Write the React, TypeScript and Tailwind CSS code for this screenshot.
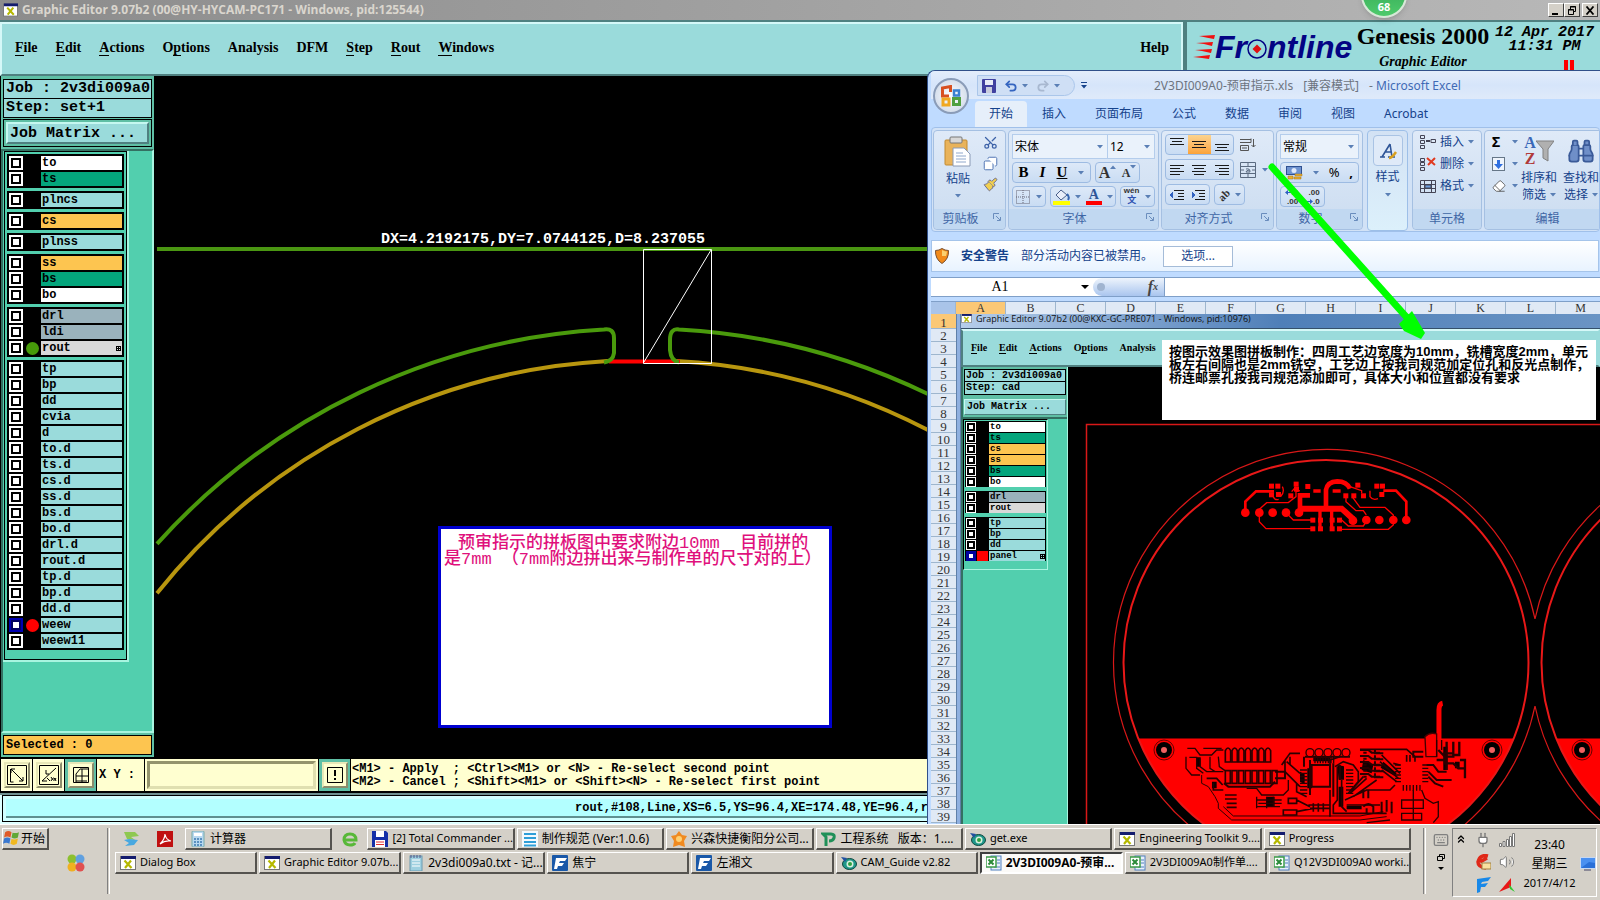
import type { ReactNode } from 'react';
import clsx from 'clsx';
import { Scissors, Copy, Paintbrush, Undo2, Redo2, Volume2, Keyboard, Plug, ChevronsUp, Binoculars, Eraser } from 'lucide-react';

const MONO = "font-['Liberation_Mono','Noto_Sans_CJK_SC',monospace]";
const SERIF = "font-['Liberation_Serif','Noto_Sans_CJK_SC',serif]";
const UI = "font-['Noto_Sans','Noto_Sans_CJK_SC',sans-serif]";

type Layer = { name: string; color: string; dot?: 'green' | 'red'; active?: boolean; mark?: boolean };

const CYAN = 'bg-[#9adbdb]';
const WHITE = 'bg-white';
const GREEN = 'bg-[#04a57c]';
const AMBER = 'bg-[#fdc550]';
const SLATE = 'bg-[#9ab2bc]';
const SILVER = 'bg-[#d9d9d9]';

const mainLayers: Layer[][] = [
    [{ name: 'to', color: WHITE }, { name: 'ts', color: GREEN }],
    [{ name: 'plncs', color: CYAN }],
    [{ name: 'cs', color: AMBER }],
    [{ name: 'plnss', color: CYAN }],
    [{ name: 'ss', color: AMBER }, { name: 'bs', color: GREEN }, { name: 'bo', color: WHITE }],
    [{ name: 'drl', color: SLATE }, { name: 'ldi', color: SLATE }, { name: 'rout', color: SILVER, dot: 'green', mark: true }],
    [
        ...['tp', 'bp', 'dd', 'cvia', 'd', 'to.d', 'ts.d', 'cs.d', 'ss.d', 'bs.d', 'bo.d', 'drl.d', 'rout.d', 'tp.d', 'bp.d', 'dd.d'].map(
            (name): Layer => ({ name, color: CYAN })
        ),
        { name: 'weew', color: CYAN, dot: 'red', active: true },
        { name: 'weew11', color: CYAN },
    ],
];

const panelLayers: Layer[][] = [
    [
        { name: 'to', color: WHITE },
        { name: 'ts', color: GREEN },
        { name: 'cs', color: AMBER },
        { name: 'ss', color: AMBER },
        { name: 'bs', color: GREEN },
        { name: 'bo', color: WHITE },
    ],
    [{ name: 'drl', color: SLATE }, { name: 'rout', color: SILVER }],
    [
        { name: 'tp', color: CYAN },
        { name: 'bp', color: CYAN },
        { name: 'dd', color: CYAN },
        { name: 'panel', color: CYAN, dot: 'red', active: true, mark: true },
    ],
];

// [label, index of the underlined letter]
const menus: [string, number][] = [
    ['File', 0], ['Edit', 0], ['Actions', 0], ['Options', 1], ['Analysis', -1],
    ['DFM', -1], ['Step', 0], ['Rout', 0], ['Windows', 0],
];

function MenuLabel({ text, at }: { text: string; at: number }) {
    if (at < 0) return <>{text}</>;
    return (
        <>
            {text.slice(0, at)}
            <span className="border-b border-black">{text[at]}</span>
            {text.slice(at + 1)}
        </>
    );
}

function XIcon({ className }: { className?: string }) {
    return (
        <svg viewBox="0 0 16 14" className={clsx('shrink-0', className)}>
            <rect x="0.5" y="0.5" width="15" height="13" fill="#fff" stroke="#777" />
            <rect x="1" y="0" width="15" height="3" fill="#141c6e" />
            <path d="M4.5 4.5l7 7.5M11 4.5l-6 7.5" stroke="#b5b800" strokeWidth="2.2" />
        </svg>
    );
}

function Caret({ className }: { className?: string }) {
    return (
        <svg viewBox="0 0 6 4" className={clsx('h-[4px] w-[6px] shrink-0', className)}>
            <path d="M0 0h6L3 3.5z" fill="#5a7fb5" />
        </svg>
    );
}

/* ---------- Graphic editor ---------- */

function WinButton({ label, children }: { label: string; children: ReactNode }) {
    return (
        <button aria-label={label} className="flex h-[14px] w-4 items-center justify-center border border-t-white border-l-white border-r-[#404040] border-b-[#404040] bg-[#d4d0c8]">
            <svg viewBox="0 0 10 9" className="h-[9px] w-[10px]" fill="none" stroke="#000">
                {children}
            </svg>
        </button>
    );
}

function LayerRow({ layer }: { layer: Layer }) {
    return (
        <label className="flex h-[14px] items-center">
            <input
                type="checkbox"
                defaultChecked={layer.active}
                className={clsx(
                    'size-[14px] shrink-0 appearance-none bg-white',
                    layer.active
                        ? 'shadow-[inset_0_0_0_2px_#0000b0,inset_0_0_0_4px_#000060]'
                        : 'shadow-[inset_0_0_0_2px_#fff,inset_0_0_0_4px_#000]'
                )}
            />
            <span className="flex w-[18px] shrink-0 justify-center">
                {layer.dot && <span className={clsx('size-[13px] rounded-full', layer.dot === 'green' ? 'bg-[#469a0a]' : 'bg-[#ff0000]')} />}
            </span>
            <span className={clsx('flex h-[14px] flex-1 items-center justify-between pr-px pl-px text-xs leading-[14px] font-bold', layer.color)}>
                {layer.name}
                {layer.mark && <MarkIcon />}
            </span>
        </label>
    );
}

function MarkIcon() {
    return (
        <svg viewBox="0 0 5 5" className="size-[5px]" fill="none" stroke="#000" strokeWidth="1" shapeRendering="crispEdges">
            <path d="M0 .5h5M0 2.5h5M0 4.5h5M.5 0v5M2.5 0v5M4.5 0v5" />
        </svg>
    );
}

function TitleBar() {
    return (
        <header className="flex h-5 shrink-0 items-center gap-1 bg-linear-to-r from-[#8c8c8c] to-[#b8b8b8] pr-0.5 pl-[3px] font-['Open_Sans','Noto_Sans',sans-serif]">
            <XIcon className="h-[14px] w-[15px]" />
            <h1 className="text-xs leading-5 font-bold text-[#dad6ce]">Graphic Editor 9.07b2 (00@HY-HYCAM-PC171 - Windows, pid:125544)</h1>
            <div className="ml-auto flex">
                <WinButton label="Minimize"><path d="M1 8h6" strokeWidth="2" /></WinButton>
                <WinButton label="Restore"><path d="M3.5 3V.5h5v5H7M1.5 3.5h5v5h-5zM3 1h6M1 4h6" /></WinButton>
                <span className="w-0.5" />
                <WinButton label="Close"><path d="M1.5 .5l7 8M8.500 .5l-7 8" strokeWidth="1.8" /></WinButton>
            </div>
        </header>
    );
}

function MenuBar() {
    return (
        <div className={clsx('flex h-14 shrink-0 border-t-2 border-[#4f8080] bg-[#9adbdb]', SERIF)}>
            <nav className="flex flex-1 items-center border-2 border-t-[#d5f8f8] border-r-[#d5f8f8] border-b-[#4f8080] border-l-[#d5f8f8] pb-0.5 pl-[13px]">
                <div className="flex gap-[18px] text-sm leading-4 font-bold">
                    {menus.map(([text, at]) => (
                        <button key={text}><MenuLabel text={text} at={at} /></button>
                    ))}
                </div>
                <button className="mr-3 ml-auto text-sm leading-4 font-bold">Help</button>
            </nav>
            <div className="flex w-[417px] border-l-4 border-[#4f8080] pl-1.5">
                <Frontline />
                <div className="flex w-36 flex-col items-center font-bold">
                    <span className="text-2xl leading-7 whitespace-nowrap">Genesis 2000</span>
                    <span className="pt-px text-sm leading-[22px] italic">Graphic Editor</span>
                </div>
                <div className={clsx('flex flex-col items-center pt-1 text-[15px] leading-[14px] font-bold whitespace-nowrap italic', MONO)}>
                    <span>12 Apr 2017</span>
                    <span>11:31 PM</span>
                    <span className="mt-1.5 ml-12 h-3 w-2.5 border-x-4 border-[#f00]" />
                </div>
            </div>
        </div>
    );
}

function Frontline() {
    return (
        <div className="flex h-12 w-[158px] shrink-0 items-center pt-0.5 font-['Liberation_Sans',sans-serif] text-[32px] leading-none font-bold text-[#040484] italic">
            <svg viewBox="0 0 22 24" className="h-6 w-[22px] shrink-0" fill="#f01010">
                <path d="M6 1l16-1-1 4-8-1.500zM3 8l17-1-1 4-8-2zM2 15l17-1-1 4-9-2zM0 22l17-2-1 4-7-1z" />
            </svg>
            Fr
            <svg viewBox="0 0 20 20" className="mt-1 size-5 shrink-0">
                <circle cx="10" cy="10" r="9" fill="none" stroke="#040484" strokeWidth="1.5" />
                <path d="M10 5.500L14.500 10 10 14.500 5.500 10z" fill="#e01010" />
            </svg>
            ntline
        </div>
    );
}

function Sidebar() {
    return (
        <aside className={clsx('flex w-[155px] shrink-0 flex-col border-x border-black bg-[#5fbfa5]', MONO)}>
            <div className="px-0.5 pt-[3px] pb-0.5">
                <div className="border border-black bg-[#9adbdb] text-[15px] leading-[18px] font-bold whitespace-nowrap">
                    <p className="h-[19px] border-b border-black pl-0.5">Job : 2v3di009a0</p>
                    <p className="h-[18px] pl-0.5">Step: set+1</p>
                </div>
                <div className="mt-px border border-black p-0.5">
                    <button className="block h-[22px] w-full border-2 border-t-[#c5f8f0] border-r-[#4f8080] border-b-[#4f8080] border-l-[#c5f8f0] bg-[#9adbdb] pl-0.5 text-left text-[15px] leading-[17px] font-bold">
                        Job Matrix ...
                    </button>
                </div>
            </div>
            <div className="flex-1 border-2 border-t-[#347062] border-r-[#a8f5e0] border-b-[#a8f5e0] border-l-[#347062] bg-[#52cfae]">
                <div className="w-[126px] border-r-2 border-b-2 border-[#a8f5e0] pl-px">
                    <div className="flex flex-col gap-[3px] border border-black bg-[#52cfae] px-0.5 pt-0.5 pb-[9px]">
                        {mainLayers.map((group, i) => (
                            <div key={i} className="flex flex-col gap-0.5 bg-black p-0.5">
                                {group.map((layer) => <LayerRow key={layer.name} layer={layer} />)}
                            </div>
                        ))}
                    </div>
                </div>
            </div>
            <div className="px-0.5 pt-0.5 pb-0.5">
                <p className="h-5 border border-black bg-[#fdc550] pl-0.5 text-xs leading-[18px] font-bold">Selected : 0</p>
            </div>
        </aside>
    );
}

function Canvas() {
    return (
        <main className="relative flex-1 overflow-hidden bg-black">
            <svg className="absolute inset-0 h-full w-full">
                <g transform="translate(-155 -76)" fill="none" strokeWidth="4">
                    <path d="M157 593.200A621 621 0 0 1 608 361M676 361A621 621 0 0 1 928 430" stroke="#b8960f" />
                    <path d="M609 361.500H680" stroke="#f00" />
                    <path d="M157 543.800A653 653 0 0 1 604 329.500Q614 328 614 338V353Q613 361 604 362.500" stroke="#4a9a0c" />
                    <path d="M928 394A653 653 0 0 0 679 329.500Q670 328 670 340V350Q671 361 679 362.500" stroke="#4a9a0c" />
                    <path d="M157 249H1600" stroke="#4a9612" />
                    <path d="M643.500 249.500H711.500V363.500H643.500zM644 362L711 250" stroke="#fff" strokeWidth="1" />
                </g>
            </svg>
            <p className={clsx('absolute top-[155px] left-[226px] text-[15px] leading-[17px] font-bold text-white', MONO)}>
                DX=4.2192175,DY=7.0744125,D=8.237055
            </p>
            <div className={clsx('absolute top-[450px] left-[283px] h-[202px] w-[394px] border-[3px] border-[#0000d0] bg-white px-[3px] pt-[7px] text-[17px] leading-4 font-medium whitespace-pre text-[#e0107c]', MONO)}>
                <p className="pl-3.5">预审指示的拼板图中要求附边10mm  目前拼的</p>
                <p>是7mm （7mm附边拼出来与制作单的尺寸对的上）</p>
            </div>
        </main>
    );
}

function ToolButton({ label, on, children }: { label: string; on?: boolean; children: ReactNode }) {
    return (
        <button
            aria-label={label}
            className={clsx('flex h-8 w-[31px] items-center justify-center', on ? 'bg-[#5fbfa5]' : 'border border-[#ffffe0] bg-[#ffffd0]')}
        >
            <span className="flex size-[26px] items-center justify-center border-2 border-t-[#e8e8b8] border-r-[#8c8c6c] border-b-[#8c8c6c] border-l-[#e8e8b8] bg-[#ffffd0]">
                <svg viewBox="0 0 20 20" className="size-5" fill="none" stroke="#000">{children}</svg>
            </span>
        </button>
    );
}

function CommandBar() {
    return (
        <div className={clsx('flex h-[36px] shrink-0 gap-px border-y-2 border-l border-black bg-black text-xs font-bold', MONO)}>
            <ToolButton label="Absolute"><path d="M.5 .5h19v19H.5zM4 4l12 12M4 8V4h4M16 12v4h-4M3.500 4v13h3" /></ToolButton>
            <ToolButton label="Angle"><path d="M.5 .5h19v19H.5zM3 16L17 3M3 16h5M7 5v4h3M12 12q3 6 5 1M12 16q3-6 5 0M8 13l3 3" /></ToolButton>
            <ToolButton label="Grid" on><path d="M2.500 2.500h15v15h-15zM5 17V9l4-5h8M5 11h12M11 4v13M5 16h11" /></ToolButton>
            <label htmlFor="xy" className="flex w-[47px] items-center bg-[#ffffd0] pl-0.5 text-xs whitespace-pre">X Y :</label>
            <div className="flex w-[173px] bg-[#ffffd0] p-0.5">
                <input id="xy" className="w-full border-[3px] border-t-[#94946c] border-r-[#e0e0b0] border-b-[#e0e0b0] border-l-[#94946c] bg-[#ffffd0] px-1 outline-none" />
            </div>
            <ToolButton label="Alert" on><path d="M2.500 2.500h15v15h-15z" /><path d="M10 5v6M10 13v2" strokeWidth="2" /></ToolButton>
            <div className="flex-1 bg-[#ffffd0] pt-1 pl-px leading-[13px] whitespace-pre">
                <p>&lt;M1&gt; - Apply  ; &lt;Ctrl&gt;&lt;M1&gt; or &lt;N&gt; - Re-select second point</p>
                <p>&lt;M2&gt; - Cancel ; &lt;Shift&gt;&lt;M1&gt; or &lt;Shift&gt;&lt;N&gt; - Re-select first point</p>
            </div>
        </div>
    );
}

function StatusBar() {
    return (
        <div className={clsx('h-[31px] shrink-0 border-t-2 border-[#6f9090] bg-[#e0ffff] pb-0.5 pl-0.5', MONO)}>
            <div className="h-[27px] border border-black bg-[#d0ffff] p-[3px]">
                <p className="h-[19px] border-b-2 border-[#5f9090] bg-[#b3ffff] pl-[569px] text-xs leading-[19px] font-bold whitespace-nowrap">
                    rout,#108,Line,XS=6.5,YS=96.4,XE=174.48,YE=96.4,r
                </p>
            </div>
        </div>
    );
}

/* ---------- Excel ---------- */

function Group({ label, width, launcher, children }: { label: string; width: string; launcher?: boolean; children: ReactNode }) {
    return (
        <section className={clsx('flex h-[100px] shrink-0 flex-col rounded-sm border border-[#a5c0e2] bg-linear-to-b from-[#dfeaf8] to-[#cbdcf0]', width)}>
            <div className="flex-1 px-[3px] pt-[3px]">{children}</div>
            <footer className={clsx('relative h-[20px] rounded-b-sm bg-[#c1d8f1] text-center text-xs leading-5 text-[#3f66a5]', launcher && 'pr-[18px]')}>
                {label}
                {launcher && (
                    <svg viewBox="0 0 8 8" className="absolute top-1 right-1 size-2" fill="none" stroke="#6a8dbd">
                        <path d="M.5 6V.5H6M3 3l4 4M7.500 4v3.500H4" />
                    </svg>
                )}
            </footer>
        </section>
    );
}

const BOX = 'flex h-[21px] items-center rounded-sm border border-[#9dbbe2] bg-linear-to-b from-[#dde9f8] to-[#c9dcf3]';

function Combo({ label, value, className }: { label: string; value: string; className: string }) {
    return (
        <div className={clsx('flex h-[25px] items-center border border-[#b4cdec] bg-[#eaf2fb] pr-1', className)}>
            <select aria-label={label} className="min-w-0 flex-1 appearance-none bg-transparent pl-0.5 text-xs leading-5 text-black outline-none">
                <option>{value}</option>
            </select>
            <Caret />
        </div>
    );
}

function Lines({ rows, y = 3, on, arrow }: { rows: [number, number][]; y?: number; on?: boolean; arrow?: 'left' | 'right' }) {
    return (
        <button aria-label="Alignment" className={clsx('flex h-[19px] flex-1 items-center justify-center', on && 'bg-linear-to-b from-[#fbd38e] to-[#fba338]')}>
            <svg viewBox="0 0 16 16" className="size-4" stroke="#1a1a1a" shapeRendering="crispEdges">
                {rows.map(([a, b], i) => <path key={i} d={`M${a} ${y + i * 3 + 0.5}H${b}`} />)}
                {arrow && <path d={arrow === 'left' ? 'M0 8l4-3v6z' : 'M6 8L2 5v6z'} fill="#2f60c0" stroke="none" />}
            </svg>
        </button>
    );
}

function ClipboardGroup() {
    return (
        <Group label="剪贴板" width="w-[73px]" launcher>
            <div className="flex text-xs text-[#15428b]">
                <button className="flex w-[42px] flex-col items-center pt-0.5">
                    <svg viewBox="0 0 28 32" className="h-8 w-7">
                        <rect x="1" y="4" width="22" height="25" rx="1" fill="#e9b35a" stroke="#c18a30" />
                        <rect x="6" y="1" width="12" height="6" rx="1" fill="#d8d8d8" stroke="#777" />
                        <path d="M9 12h11l6 6v12H9z" fill="#fff" stroke="#8a9ab5" />
                        <path d="M12 17h7M12 20h10M12 23h10M12 26h10" stroke="#8fa8cc" />
                    </svg>
                    <span className="leading-[22px]">粘贴</span>
                    <Caret className="mt-1" />
                </button>
                <div className="flex flex-1 flex-col items-center gap-1.5 pt-px">
                    <button aria-label="剪切"><Scissors className="size-[15px] -rotate-90 text-[#3d62a8]" /></button>
                    <button aria-label="复制"><Copy className="size-[15px] -scale-x-100 fill-white text-[#4a6fb0]" strokeWidth={1.5} /></button>
                    <button aria-label="格式刷"><Paintbrush className="size-[15px] fill-[#f0cf50] text-[#6a6a90]" strokeWidth={1.5} /></button>
                </div>
            </div>
        </Group>
    );
}

function FontGroup() {
    return (
        <Group label="字体" width="w-[151px]" launcher>
            <div className="flex">
                <Combo label="字体" value="宋体" className="w-[96px]" />
                <Combo label="字号" value="12" className="w-[47px] border-l-0" />
            </div>
            <div className={clsx('mt-[3px] flex gap-1 font-bold', SERIF)}>
                <div className={clsx(BOX, 'w-[79px] justify-around text-[15px]')}>
                    <button>B</button>
                    <button className="italic">I</button>
                    <button className="underline">U</button>
                    <Caret />
                </div>
                <div className={clsx(BOX, 'w-[45px] justify-around text-[#333]')}>
                    <button className="flex items-start text-base leading-4">A<Caret className="rotate-180" /></button>
                    <button className="flex items-start text-xs leading-4">A<Caret /></button>
                </div>
            </div>
            <div className="mt-[3px] flex justify-between">
                <div className={clsx(BOX, 'w-[34px] justify-around')}>
                    <svg viewBox="0 0 14 14" className="size-[14px]" stroke="#667" strokeDasharray="1 1" fill="none"><path d="M.5 .5h13v13H.5zM7 0v14M0 7h14" /></svg>
                    <Caret />
                </div>
                <div className={clsx(BOX, 'w-[66px] justify-around')}>
                    <svg viewBox="0 0 17 16" className="h-4 w-[17px]">
                        <path d="M3 6l5-5 6 5-6 5z" fill="#e8eefa" stroke="#4a5f8a" /><path d="M14 5q3 3 1 6" fill="none" stroke="#3565b0" strokeWidth="2" />
                        <rect y="12" width="17" height="4" fill="#ff0" />
                    </svg>
                    <Caret />
                    <span className={clsx('flex w-4 flex-col items-center border-b-4 border-[#f00] text-sm leading-3 font-bold text-[#2f5597]', SERIF)}>A</span>
                    <Caret />
                </div>
                <div className={clsx(BOX, 'w-[35px] justify-around text-[#2c50b0]')}>
                    <span className="flex flex-col items-center font-['Liberation_Sans','Noto_Sans_CJK_SC',sans-serif]">
                        <span className="text-[8px] leading-[8px] font-bold text-[#333]">wén</span>
                        <span className="text-[9px] leading-[11px] font-bold">文</span>
                    </span>
                    <Caret />
                </div>
            </div>
        </Group>
    );
}

function AlignGroup() {
    return (
        <Group label="对齐方式" width="w-[113px]" launcher>
            <div className="flex items-center gap-1.5">
                <div className={clsx(BOX, 'w-[69px]')}>
                    <Lines rows={[[1, 15], [3, 13], [1, 15]]} y={1} />
                    <Lines rows={[[1, 15], [3, 13], [1, 15]]} y={4} on />
                    <Lines rows={[[1, 15], [3, 13], [1, 15]]} y={7} />
                </div>
                <svg viewBox="0 0 16 16" className="size-4" fill="none" stroke="#555"><path d="M0 2.500h11M0 5.500h11v-4M.5 8.500h8v5h-8zM2 11h5M13.500 2v8M11.500 8l2 2 2-2" /></svg>
            </div>
            <div className="mt-1 flex items-center gap-1.5">
                <div className={clsx(BOX, 'w-[69px]')}>
                    <Lines rows={[[1, 15], [1, 11], [1, 15], [1, 11]]} />
                    <Lines rows={[[1, 15], [3, 13], [1, 15], [3, 13]]} />
                    <Lines rows={[[1, 15], [5, 15], [1, 15], [5, 15]]} />
                </div>
                <svg viewBox="0 0 16 16" className="size-4" fill="none" stroke="#5a6a80"><path d="M.5 .5h15v15H.5zM8 0v4M8 12v4M0 4.500h16M0 11.500h16M1 8h3M12 8h3M6 7q4-1 4 3M10 8q-4 0-4 2h4" /></svg>
                <Caret />
            </div>
            <div className="mt-1 flex gap-1">
                <div className={clsx(BOX, 'w-[45px]')}>
                    <Lines rows={[[5, 15], [9, 15], [9, 15], [5, 15]]} arrow="left" />
                    <Lines rows={[[5, 15], [9, 15], [9, 15], [5, 15]]} arrow="right" />
                </div>
                <button className={clsx(BOX, 'w-[31px] justify-around')} aria-label="方向">
                    <span className={clsx('-rotate-45 text-[11px] leading-3 font-bold text-[#333]', SERIF)}>ab</span>
                    <Caret />
                </button>
            </div>
        </Group>
    );
}

function NumberGroup() {
    return (
        <Group label="数字" width="w-[87px]" launcher>
            <Combo label="数字格式" value="常规" className="w-full" />
            <div className={clsx(BOX, 'mt-[3px] justify-around text-[13px]')}>
                <svg viewBox="0 0 17 16" className="h-4 w-[17px]">
                    <rect x=".5" y="1.500" width="15" height="8" fill="#6f93d0" stroke="#2f5090" /><circle cx="8" cy="5.500" r="2.500" fill="#dfe8fa" />
                    <path d="M9 9h7v2H9zM8 12h7v2H8zM2 11h5v3H2z" fill="#e8b030" stroke="#a87010" strokeWidth=".5" />
                </svg>
                <Caret />
                <button>%</button>
                <button className="font-bold">,</button>
            </div>
            <div className={clsx(BOX, "mt-[3px] w-[45px] justify-around font-['Liberation_Sans',sans-serif] text-[8px] leading-[9px] font-bold text-[#333]")}>
                <button aria-label="增加小数位数" className="flex flex-col items-end">
                    <span className="flex items-center"><DecimalArrow />.0</span>
                    <span>.00</span>
                </button>
                <button aria-label="减少小数位数" className="flex flex-col items-end">
                    <span>.00</span>
                    <span className="flex items-center"><DecimalArrow className="rotate-180" />.0</span>
                </button>
            </div>
        </Group>
    );
}

function DecimalArrow({ className }: { className?: string }) {
    return <svg viewBox="0 0 6 5" className={clsx('h-[5px] w-[6px]', className)}><path d="M0 2.500L3 0v2h3v1H3v2z" fill="#2f60c0" /></svg>;
}

function SmallAction({ icon, label }: { icon: ReactNode; label: string }) {
    return (
        <button className="flex h-[22px] items-center gap-1 pl-1 text-xs text-[#15428b]">
            <svg viewBox="0 0 16 16" className="size-4" fill="none" stroke="#445">{icon}</svg>
            {label}
            <Caret />
        </button>
    );
}

function Ribbon() {
    return (
        <div className="flex h-[105px] shrink-0 gap-0.5 overflow-hidden rounded-sm border border-[#a0c0ea] bg-[#d2e2f6] pt-0.5 pl-px">
            <ClipboardGroup />
            <FontGroup />
            <AlignGroup />
            <NumberGroup />
            <button className="mx-0.5 flex h-[101px] w-[41px] shrink-0 flex-col items-center rounded-sm border border-[#9dbfe8] bg-linear-to-b from-[#d3e2f4] to-[#dcf0fb] pt-1 text-xs text-[#15428b]">
                <span className="flex h-[31px] w-[30px] items-center justify-center rounded-sm border border-[#a9c3e4] bg-[#dfeaf8]">
                    <svg viewBox="0 0 20 20" className="size-5" fill="none" stroke="#2f5597">
                        <path d="M2 16h5M10 16h7M4 16L12 3M12 3l2 13M7 11h6" strokeWidth="1.600" />
                        <path d="M11 17q3 0 7-6" stroke="#d8a020" strokeWidth="2.500" />
                    </svg>
                </span>
                <span className="pt-px leading-5">样式</span>
                <Caret className="mt-1.5" />
            </button>
            <Group label="单元格" width="w-[70px]">
                <div className="-mt-[3px]">
                    <SmallAction label="插入" icon={<><path d="M.5 1.500h4v3h-4zM.5 6.500h4v3h-4zM.5 11.500h4v3h-4zM11 5.500h4.500v3H11z" /><path d="M6 7h4" strokeWidth="2" /></>} />
                    <SmallAction label="删除" icon={<><path d="M.5 2.500h4v3h-4zM.5 6.500h4v3h-4zM.5 11.500h4v3h-4z" /><path d="M7 2l8 7M15 2L8 9" stroke="#e03a20" strokeWidth="2" /></>} />
                    <SmallAction label="格式" icon={<><path d="M.5 2.500h15v12H.5zM0 6.500h16M0 10.500h16M4.500 2v13M11.500 2v13" /><path d="M5 7h6v3H5z" fill="#6f9fe0" /></>} />
                </div>
            </Group>
            <Group label="编辑" width="w-[127px]">
                <div className="-mt-[3px] flex text-xs text-[#15428b]">
                    <div className="flex w-[30px] flex-col pl-1 text-black">
                        <button className="flex h-[22px] items-center justify-between text-sm font-bold">Σ<Caret /></button>
                        <button aria-label="填充" className="flex h-[22px] items-center justify-between">
                            <svg viewBox="0 0 13 14" className="h-[14px] w-[13px]"><rect x=".5" y=".5" width="12" height="13" fill="#eef4fc" stroke="#678" /><path d="M5 3h3v4h3l-4.500 5L2 7h3z" fill="#2f6fe0" /></svg>
                            <Caret />
                        </button>
                        <button aria-label="清除" className="flex h-[22px] items-center justify-between"><Eraser className="size-[14px] fill-white text-[#555]" strokeWidth={1.5} /><Caret /></button>
                    </div>
                    <button className="flex w-[42px] flex-col items-center pt-0.5 leading-[17px] whitespace-nowrap">
                        <span className={clsx('flex h-[36px] items-center text-base leading-4 font-bold', SERIF)}>
                            <span className="flex flex-col text-[#3a68b8]"><span>A</span><span className="text-[#b03a3a]">Z</span></span>
                            <svg viewBox="0 0 18 24" className="h-6 w-[18px]"><path d="M0 2h18l-6 8v12l-5-3V10z" fill="#b0b0b0" stroke="#808080" /></svg>
                        </span>
                        <span>排序和</span>
                        <span className="flex items-center gap-1">筛选<Caret /></span>
                    </button>
                    <button className="flex w-[42px] flex-col items-center pt-0.5 leading-[17px] whitespace-nowrap">
                        <span className="flex h-[36px] items-center"><Binoculars className="size-7 fill-[#6f8fc8] text-[#3a5a98]" strokeWidth={1.5} /></span>
                        <span>查找和</span>
                        <span className="flex items-center gap-1">选择<Caret /></span>
                    </button>
                </div>
            </Group>
        </div>
    );
}

function ExcelTitle() {
    return (
        <div className="flex h-7 shrink-0 items-center bg-linear-to-b from-[#e3edfb] via-[#d6e5fa] to-[#dfeafa] pt-px pl-[46px] text-xs">
            <div className="flex h-[21px] w-[98px] shrink-0 items-center gap-1 rounded-r-full border border-[#aac6ea] bg-[#cfdff5] pl-1">
                <button aria-label="保存">
                    <svg viewBox="0 0 14 14" className="size-[14px]"><rect width="14" height="14" rx="1" fill="#4040a0" /><rect x="3" y="1" width="8" height="5" fill="#e8ecf8" /><rect x="4" y="8" width="6" height="6" fill="#c8ccdc" /></svg>
                </button>
                <button aria-label="撤消" className="ml-1"><Undo2 className="size-[14px] text-[#3565c0]" strokeWidth={3} /></button>
                <Caret />
                <button aria-label="恢复" className="ml-1"><Redo2 className="size-[14px] text-[#a8b8d0]" strokeWidth={3} /></button>
                <Caret />
            </div>
            <svg viewBox="0 0 6 7" className="ml-1.5 h-[7px] w-[6px] shrink-0"><path d="M0 0h6v1H0zM0 3h6L3 6.500z" fill="#15428b" /></svg>
            <h2 className="ml-[67px] flex gap-2.5 whitespace-nowrap text-[#6d7480]">
                <span>2V3DI009A0-预审指示.xls</span>
                <span>[兼容模式]</span>
                <span>- <span className="text-[#3f6ab5]">Microsoft Excel</span></span>
            </h2>
        </div>
    );
}

const tabs = ['开始', '插入', '页面布局', '公式', '数据', '审阅', '视图', 'Acrobat'];

function ExcelWindow() {
    return (
        <section className={clsx('absolute top-[70px] right-0 bottom-0 left-[927px] flex flex-col overflow-hidden rounded-tl-lg border-t border-l border-[#30508a] bg-[#bfdbff] pl-[3px]', UI)}>
            <ExcelTitle />
            <div className="flex h-7 shrink-0 items-end gap-px pl-[44px]" role="tablist">
                {tabs.map((tab, i) => (
                    <button
                        key={tab}
                        role="tab"
                        aria-selected={i === 0}
                        className={clsx('h-[26px] rounded-t-sm px-[14px] text-xs leading-6 whitespace-nowrap text-[#15428b]', i === 0 && 'bg-[#e6effa]')}
                    >
                        {tab}
                    </button>
                ))}
            </div>
            <button aria-label="Office" className="absolute top-[7px] left-[5px] flex size-9 items-center justify-center rounded-full border-2 border-[#8a9cb8] bg-radial from-white to-[#c5d2e4]">
                <svg viewBox="0 0 22 22" className="size-[22px]" fill="none" strokeWidth="3">
                    <path d="M9 11H2.500V3l8-1.500V7" stroke="#d85020" /><path d="M14 5.500h5v5h-5z" stroke="#3a80d0" strokeWidth="2.500" />
                    <path d="M3 14h6v6H3z" stroke="#f0a820" /><path d="M13.500 13.500h6v6h-6z" stroke="#50a040" />
                </svg>
            </button>
            <Ribbon />
            <div className="mt-2 mr-px flex h-8 shrink-0 items-center border border-[#a5c4ea] bg-linear-to-b from-white to-[#e8f3ff] pl-[3px] text-xs text-[#15428b]">
                <svg viewBox="0 0 14 16" className="h-4 w-[14px]"><path d="M7 .5q3 2 6.500 2Q14 11 7 15.500 0 11 .5 2.500 4 2.500 7 .5z" fill="#f28a1a" stroke="#7a5030" /><path d="M7 2q3 1.500 5 1.500-.5 3-1 4.500H7z" fill="#fbd070" /></svg>
                <strong className="ml-3">安全警告</strong>
                <span className="ml-3">部分活动内容已被禁用。</span>
                <button className="ml-2.5 h-[21px] w-[70px] border border-[#a5bcd8] bg-white leading-[18px]">选项...</button>
            </div>
            <div className="mt-[5px] flex h-5 shrink-0 border-y border-[#7f9fc8] bg-white text-sm text-black">
                <input aria-label="名称框" defaultValue="A1" className={clsx('w-[138px] text-center outline-none', SERIF)} />
                <span className="flex w-5 items-center justify-end"><svg viewBox="0 0 8 4" className="h-1 w-2"><path d="M0 0h8L4 4z" /></svg></span>
                <span className={clsx('ml-1 flex w-[72px] items-center justify-end rounded-l-full border-r border-[#7f9fc8] bg-linear-to-b from-[#eef4fc] to-[#a9c5ee] pr-1.5 font-bold text-[#444] italic', SERIF)}>
                    <span className="mr-auto ml-1 size-2 rounded-full bg-[#a0b4d0]" />
                    <i className="text-base leading-4">f</i><i className="text-[10px]">x</i>
                </span>
                <input aria-label="编辑栏" className="min-w-0 flex-1 outline-none" />
            </div>
            <Sheet />
        </section>
    );
}

function Sheet() {
    return (
        <div className="mt-1 flex min-h-0 flex-1 flex-col">
            <div className={clsx('flex h-[13px] shrink-0 border-t border-[#7f9fc8] bg-[#e0e9f5] text-xs leading-[13px] text-[#333]', SERIF)}>
                <span className="w-[25px] shrink-0 border-r border-[#9eb6ce] bg-[#a9c4e9]" />
                {'ABCDEFGHIJKLM'.split('').map((c) => (
                    <span key={c} className={clsx('w-[50px] shrink-0 border-r border-[#9eb6ce] text-center', c === 'A' && 'bg-[#fbc876]')}>{c}</span>
                ))}
            </div>
            <div className="flex min-h-0 flex-1">
                <ol className={clsx('w-[25px] shrink-0 text-center text-[13px] leading-[13px] text-[#333]', SERIF)}>
                    {Array.from({ length: 39 }, (_, i) => (
                        <li key={i} className={clsx('box-border border-b border-[#9eb6ce]', i === 0 ? 'h-[15px] bg-[#fbc876] pt-0.5' : 'h-[13px] bg-[#e0e9f5]')}>{i + 1}</li>
                    ))}
                </ol>
                <div className="w-[5px] shrink-0 border-x border-[#5f7fa8] bg-[#8fb0e0]" />
                <Embedded />
            </div>
        </div>
    );
}

/* ---------- Picture placed on the sheet ---------- */

function Embedded() {
    return (
        <div className="relative flex min-w-0 flex-1 flex-col overflow-hidden bg-black">
            <div className="flex h-[15px] shrink-0 items-start gap-1 border-b border-[#35506a] bg-linear-to-r from-[#b5cdea] via-[#4f7fb8] to-[#6a94c4] font-['Open_Sans',sans-serif] text-[9px] leading-[10px] text-[#111]">
                <XIcon className="h-[9px] w-[11px]" />
                <span className="whitespace-nowrap">Graphic Editor 9.07b2 (00@KXC-GC-PRE071 - Windows, pid:10976)</span>
            </div>
            <nav className={clsx('flex h-[38px] shrink-0 items-center gap-3 border-2 border-t-[#d5f8f8] border-r-[#9adbdb] border-b-[#4f8080] border-l-[#4f8080] bg-[#9adbdb] pb-0.5 pl-2 text-[10px] leading-[11px] font-bold', SERIF)}>
                {menus.slice(0, 5).map(([text, at]) => (
                    <span key={text}><MenuLabel text={text} at={at} /></span>
                ))}
            </nav>
            <div className="flex min-h-0 flex-1">
                <aside className={clsx('w-[107px] shrink-0 border-r border-l-2 border-r-[#a8f5e0] border-l-[#347062] bg-[#52cfae] font-bold', MONO)}>
                    <div className="border-b-2 border-[#347062] bg-[#5fbfa5] p-px pt-0.5 pb-0.5 text-[10px]">
                        <p className="h-[13px] border border-black bg-[#9adbdb] pl-px leading-[11px] whitespace-nowrap">Job : 2v3di009a0</p>
                        <p className="h-[13px] border border-t-0 border-black bg-[#9adbdb] pl-px leading-[12px]">Step: cad</p>
                        <p className="mt-1 h-4 border border-t-[#c5f8f0] border-r-[#4f8080] border-b-[#4f8080] border-l-[#c5f8f0] bg-[#9adbdb] pl-0.5 leading-[14px]">Job Matrix ...</p>
                    </div>
                    <div className="flex w-[85px] flex-col gap-1 border border-t-black border-r-[#a8f5e0] border-b-[#a8f5e0] border-l-black p-px pb-2">
                        {panelLayers.map((group, i) => (
                            <div key={i} className="flex flex-col gap-px bg-black p-px pb-0">
                                {group.map((layer) => (
                                    <div key={layer.name} className="flex h-[10px] text-[9px] leading-[10px]">
                                        <span
                                            className={clsx(
                                                'size-[10px] shrink-0 bg-white',
                                                layer.active ? 'shadow-[inset_0_0_0_3px_#0000a0]' : 'shadow-[inset_0_0_0_1px_#fff,inset_0_0_0_3px_#000]'
                                            )}
                                        />
                                        <span className={clsx('ml-px w-[11px]', layer.dot && 'bg-[#f00]')} />
                                        <span className={clsx('ml-px flex flex-1 items-center justify-between pl-px', layer.color)}>
                                            {layer.name}
                                            {layer.mark && <MarkIcon />}
                                        </span>
                                    </div>
                                ))}
                            </div>
                        ))}
                    </div>
                </aside>
                <Board />
            </div>
            <div className="absolute top-[26px] right-1 left-[201px] h-20 bg-white pt-[5px] pl-[7px] font-['Liberation_Sans','Noto_Sans_CJK_SC',sans-serif] text-[13px] leading-[13px] font-bold whitespace-nowrap text-black">
                <p>按图示效果图拼板制作：四周工艺边宽度为10mm，铣槽宽度2mm，单元</p>
                <p>板左右间隔也是2mm铣空，工艺边上按我司规范加定位孔和反光点制作，</p>
                <p>桥连邮票孔按我司规范添加即可，具体大小和位置都没有要求</p>
            </div>
        </div>
    );
}

const smallPads = [
    [357, 551], [376, 551], [357, 577], [378, 576], [431, 545], [415, 580], [466, 552], [432, 560], [580, 580], [604, 580],
    [616, 548], [633, 580], [673, 551], [690, 551], [688, 576], [481, 653], [504, 653], [539, 653], [561, 653], [481, 679],
    [504, 679], [539, 679], [561, 679],
];

function TopCircuit() {
    return (
        <g transform="translate(1150 300) scale(.3333)" fill="none" stroke="#f00">
            {[[286, 638], [328, 638], [368, 638], [408, 638], [447, 638], [609, 662], [649, 660], [688, 660], [730, 660], [769, 660]].map(([x, y]) => (
                <circle key={x} cx={x} cy={y} r="13" fill="#f00" stroke="none" />
            ))}
            {smallPads.map(([x, y]) => <rect key={`${x}-${y}`} x={x} y={y} width="15" height="15" fill="#f00" stroke="none" />)}
            <path d="M286 638V605L318 574H372M700 572H738L769 605V660" strokeWidth="8" />
            <path d="M328 638V628L350 608H415L438 590V575L450 572M328 640V665L348 686H485M408 638L430 660H485M438 560L425 575M397 560Q405 575 392 590M370 590Q375 602 386 598" strokeWidth="4" />
            <path d="M588 590V605L618 632H640L649 645M608 592L630 622H705L730 645V675L715 688H575M575 660L595 678H640L649 665M600 560L635 572V580M660 572V590Q668 602 684 596" strokeWidth="4" />
            <path d="M510 625V686M545 625V686M490 573H512M548 573H572" strokeWidth="10" />
            <path d="M450 638V586H480" strokeWidth="14" />
            <path d="M447 626H575L610 658" strokeWidth="18" />
            <path d="M528 625V570Q532 545 562 544Q590 544 600 566" strokeWidth="14" />
        </g>
    );
}

function BottomCircuit() {
    const pins = Array.from({ length: 8 }, (_, i) => i);
    return (
        <g transform="translate(1100 640) scale(.3333)" fill="none" stroke="#2a0000" strokeWidth="4">
            {/* antenna feed */}
            <path d="M1017 300V210Q1017 192 1028 190" stroke="#f00" strokeWidth="15" />
            <path d="M975 290Q990 275 1010 282V350H978z" fill="#f00" stroke="#400" />
            <path d="M1010 300V350M1025 300V330" />
            {/* bare laminate */}
            <path
                d="M622 385h14v60h-14zM712 375l20 4v40h-16zM716 440h14v60h-14zM790 360l30 15-5 25-30-10zM850 365l40 35-6 8-42-25zM1030 320h12v70h-12zM1065 365h14v20h-14zM600 395l14 8v30l-14-8zM640 352h50v12h-50zM740 498h45v10h-45zM500 470h24v30h-24zM336 425h14v20h-14zM290 352h12v28h-12z"
                fill="#120000"
                stroke="none"
            />
            {/* connector pads */}
            {pins.slice(0, 7).map((i) => <path key={i} d={`M${376 + i * 20} 366V332q8-16 16 0V366z`} strokeWidth="5" />)}
            {pins.map((i) => <path key={i} d={`M${376 + i * 20} 392h15V430h-15z`} strokeWidth="5" />)}
            <path d="M372 430L385 440H510L525 425M525 395H555V415H525" strokeWidth="6" />
            {/* left nets */}
            <path d="M262 325H285L300 345H335L350 330H370M310 325H365M258 350V385L275 405H300M268 352H290V385L310 400M300 355V380L320 395H350M330 350V385L345 395H370M355 350L358 380 375 392" />
            <path d="M305 405V430L325 440 345 470 355 490V505L395 540H780L860 530M370 500L400 528H780L850 515" strokeWidth="3" />
            <path d="M320 415H350L368 435M340 430V450H370M375 465H410M375 477H410M380 490H410M380 502H410" strokeWidth="5" />
            <path d="M440 445H470L485 465H550L565 450V420M470 480H545M475 490H545M470 500H540M470 470V505M500 470V505M520 470V500" />
            {/* main controller */}
            <path d="M615 350H750M612 350V380M635 375H690V440H635zM630 360V465M700 370V470" strokeWidth="6" />
            {pins.slice(0, 5).map((i) => <circle key={i} cx={630 + i * 27} cy="338" r="12" fill="#f00" />)}
            {pins.map((i) => <path key={i} d={`M600 ${390 + i * 10}H622M738 ${390 + i * 10}H760M${645 + i * 8} 350V370`} />)}
            <path d="M545 375L570 340H600M555 360V395L590 430V455L620 470M560 365L600 400M570 350V375M560 400L600 440" strokeWidth="5" />
            <path d="M705 380L730 365 760 375 775 395V425L745 460M720 375V420M712 380V480L700 495V520H860M725 420V500L740 515M690 380V360L720 350" strokeWidth="5" />
            <path d="M735 480L800 450H870L885 435M740 495H840M760 470L830 420M750 460L800 415M755 450L790 410" strokeWidth="5" />
            <path d="M625 495H690M630 505H690M640 490V515M655 490V515M670 490V515M690 450V530M565 475H590V490H565zM550 510H590V525H550zM590 480L630 500M590 515L640 505" strokeWidth="5" />
            <path d="M790 500Q805 485 820 500V520M800 505V520M845 485V520M860 480V515M875 485V520M790 450V475M805 450V475" strokeWidth="6" />
            {/* discrete field */}
            {pins.slice(0, 5).map((i) => (
                <path key={i} d={`M780 ${330 + i * 18}H805L815 ${338 + i * 18}H840M825 ${328 + i * 18}V${340 + i * 18}H850M790 ${338 + i * 18}H800`} strokeWidth="6" />
            ))}
            <path d="M780 328H920L945 350V365M845 345L900 400M840 365L895 415M845 390L890 425M880 370L900 375M920 365V345M930 365V345" strokeWidth="5" />
            {/* square package */}
            {pins.slice(0, 6).map((i) => <path key={i} d={`M885 ${375 + i * 10}H903M967 ${375 + i * 10}H985M${910 + i * 10} 435V452`} />)}
            <path d="M980 375H1000L1015 395H1040M985 395L1010 420H1055M985 410L1005 430 1030 440M970 350H940V335H970" strokeWidth="6" />
            <path d="M1015 330L1035 350V370H1060L1075 385H1098M1040 305V390M1060 305V350H1035M1078 305V345H1060M1080 360H1095V415M1030 340H1060M1010 360H1040" strokeWidth="7" />
            <path d="M940 450V480H905V505H970V480H940M905 520H965V540H905zM940 480V540M965 450L975 475 1000 490 1015 485V530L1000 548M800 548L870 540" />
        </g>
    );
}

function Board() {
    return (
        <svg className="min-w-0 flex-1">
            <defs>
                <clipPath id="pour"><path d="M1060 738.500H1600V900H1060z" /></clipPath>
            </defs>
            <g transform="translate(-1068 -367)" fill="none" stroke="#d81818">
                <path d="M1086.500 830V424.500H1700" strokeWidth="1.500" />
                <g clipPath="url(#pour)" fill="#f00" stroke="none">
                    <circle cx="1326" cy="662.500" r="202.500" />
                    <circle cx="1744" cy="662.500" r="202.500" />
                </g>
                <path d="M1535 706A213 213 0 1 1 1535 619A213 213 0 0 1 1744 450M1535 706A213 213 0 0 0 1744 876" strokeWidth="1.200" />
                <circle cx="1326" cy="662.500" r="202.500" strokeWidth="2" stroke="#e81818" />
                <circle cx="1744" cy="662.500" r="202.500" strokeWidth="2" stroke="#e81818" />
                {[1164, 1492, 1582].map((x) => (
                    <g key={x} stroke="none">
                        <circle cx={x} cy="750" r="10" fill="none" stroke="#600" />
                        <circle cx={x} cy="750" r="8" fill="#000" />
                        <circle cx={x} cy="750" r="3" fill="#f06060" />
                    </g>
                ))}
                <TopCircuit />
                <BottomCircuit />
            </g>
        </svg>
    );
}

/* ---------- Taskbar ---------- */

type Task = { text: string; icon: ReactNode; small?: boolean; active?: boolean };

const calcIcon = <svg viewBox="0 0 16 16" className="size-4 shrink-0"><rect x="2" width="12" height="16" rx="1" fill="#b8d8f0" stroke="#7aa" /><rect x="4" y="2" width="8" height="3" fill="#fff" /><path d="M4 8h8M4 11h8M4 14h8" stroke="#5a90c0" strokeWidth="2" strokeDasharray="2 1" /></svg>;
const diskIcon = <svg viewBox="0 0 16 16" className="size-4 shrink-0"><path d="M0 0h14l2 2v14H0z" fill="#1530a8" /><rect x="4" width="8" height="6" fill="#fff" /><rect x="3" y="9" width="10" height="7" fill="#fff" /><path d="M4 11h8M4 13.500h8" stroke="#e03030" /></svg>;
const listIcon = <svg viewBox="0 0 16 16" className="size-4 shrink-0"><rect width="16" height="16" fill="#f4fafd" /><path d="M2 3h12M2 7h12M2 11h12M2 14.500h12" stroke="#2f9fd8" strokeWidth="2" /></svg>;
const starIcon = <svg viewBox="0 0 16 16" className="size-4 shrink-0"><path d="M8 0l3 4 5 1-3 5 1 6-6-2-6 2 1-6-3-5 5-1z" fill="#f08a20" /><circle cx="8" cy="8" r="3" fill="#ffd070" /></svg>;
const greenPIcon = <svg viewBox="0 0 16 16" className="size-4 shrink-0" fill="none" stroke="#209058" strokeWidth="3"><path d="M5 15V6l-3-3h8q4 0 3 4-1 3-5 3" /></svg>;
const eyeIcon = <svg viewBox="0 0 16 16" className="size-4 shrink-0"><ellipse cx="8.500" cy="9" rx="7" ry="5.500" fill="#20988a" stroke="#104840" /><circle cx="9" cy="9" r="3.500" fill="#d8f0e0" /><circle cx="9" cy="9" r="2" fill="#30a040" /><path d="M0 2l6 1-2 4z" fill="#2050a0" /></svg>;
const noteIcon = <svg viewBox="0 0 16 16" className="size-4 shrink-0"><rect x="2" y="1" width="12" height="15" fill="#9fd0e0" stroke="#6a9ab0" /><path d="M4 5h8M4 8h8M4 11h8" stroke="#fff" /><path d="M3 0v3M6 0v3M9 0v3M12 0v3" stroke="#558" /></svg>;
const blueFIcon = <svg viewBox="0 0 16 16" className="size-4 shrink-0"><rect width="16" height="16" rx="1" fill="#1a58a8" /><path d="M4 3h11l-2 3H8L7 8h5l-2 3H6l-1 3H2z" fill="#fff" /></svg>;
const xlsIcon = <svg viewBox="0 0 16 16" className="size-4 shrink-0"><rect x="5" y="1" width="10" height="14" fill="#e8f0fa" stroke="#5080c0" /><path d="M11 5h3M11 8h3M8 12h6" stroke="#5080c0" /><rect x="0" y="2" width="10" height="10" fill="#fff" stroke="#3a9a48" strokeWidth="1.500" /><path d="M2.500 4.500l5 5M7.500 4.500l-5 5" stroke="#2a8a38" strokeWidth="2" /></svg>;
const xIcon = <XIcon className="h-[14px] w-4" />;

const firstTask: Task = { text: '计算器', icon: calcIcon };
const topTasks: Task[] = [
    { text: '[2] Total Commander ...', icon: diskIcon, small: true },
    { text: '制作规范 (Ver:1.0.6)', icon: listIcon },
    { text: '兴森快捷衡阳分公司...', icon: starIcon },
    { text: '工程系统   版本：1....', icon: greenPIcon },
    { text: 'get.exe', icon: eyeIcon, small: true },
    { text: 'Engineering Toolkit 9....', icon: xIcon, small: true },
    { text: 'Progress', icon: xIcon, small: true },
];
const bottomTasks: Task[] = [
    { text: 'Dialog Box', icon: xIcon, small: true },
    { text: 'Graphic Editor 9.07b...', icon: xIcon, small: true },
    { text: '2v3di009a0.txt - 记...', icon: noteIcon },
    { text: '焦宁', icon: blueFIcon },
    { text: '左湘文', icon: blueFIcon },
    { text: 'CAM_Guide v2.82', icon: eyeIcon, small: true },
    { text: '2V3DI009A0-预审...', icon: xlsIcon, active: true },
    { text: '2V3DI009A0制作单....', icon: xlsIcon, small: true },
    { text: 'Q12V3DI009A0 worki...', icon: xlsIcon, small: true },
];

function TaskButton({ task }: { task: Task }) {
    return (
        <button
            className={clsx(
                'flex h-[22px] min-w-0 flex-1 items-center gap-1 overflow-hidden border-r-2 border-b-2 pl-1 whitespace-pre',
                task.small ? 'text-[11px]' : 'text-xs',
                task.active ? 'border-t-2 border-l-2 border-t-[#404040] border-r-white border-b-white border-l-[#404040] bg-[#fbfaf8] font-bold' : 'border-t border-l border-t-white border-r-[#55534f] border-b-[#55534f] border-l-white'
            )}
        >
            {task.icon}
            {task.text}
        </button>
    );
}

function Taskbar() {
    return (
        <footer className={clsx('flex h-[76px] shrink-0 border-t border-white bg-[#d4d0c8] pt-[3px] text-black', UI)}>
            <div className="flex w-[107px] shrink-0 flex-col pl-0.5">
                <button className="flex h-[22px] w-[47px] items-center gap-px border-t border-r-2 border-b-2 border-l border-t-white border-r-[#55534f] border-b-[#55534f] border-l-white text-xs whitespace-nowrap">
                    <svg viewBox="0 0 16 16" className="size-[17px] shrink-0">
                        <path d="M2 2q3-2 6 0L7 7Q4 5 1 7z" fill="#e05a28" /><path d="M9 2.500q3 1 6-.5l-1 5q-3 2-6 0z" fill="#60a838" />
                        <path d="M1 8q3-2 6 0l-1 5q-3-2-6 0z" fill="#3a78d0" /><path d="M8 8.500q3 1 6-.5l-1 5q-3 2-6 0z" fill="#f0b820" />
                    </svg>
                    开始
                </button>
                <svg viewBox="0 0 18 18" className="mt-1 ml-[65px] size-[18px]">
                    <circle cx="5" cy="5" r="4.500" fill="#8cc030" /><circle cx="13" cy="5" r="4.500" fill="#60a0e0" />
                    <circle cx="5" cy="13" r="4.500" fill="#f0b020" /><circle cx="13" cy="13" r="4.500" fill="#e05050" />
                </svg>
            </div>
            <div className="h-[66px] w-[3px] shrink-0 border-r border-l border-l-[#808080] border-r-white" />
            <div className="flex min-w-0 flex-1 flex-col gap-0.5 pl-[5px]">
                <div className="flex items-center gap-0.5">
                    <svg viewBox="0 0 16 16" className="ml-2 size-4 shrink-0"><path d="M1 1h11l4 4-8 1 4 3-8-1z" fill="#8ec850" /><path d="M6 8l9 1-4 5-9 1 4-3-5-3z" fill="#48a8e0" /></svg>
                    <svg viewBox="0 0 16 16" className="mr-2.5 ml-4 size-4 shrink-0"><rect width="16" height="16" fill="#c01010" /><path d="M3 13Q8 8 8 3q1 6 6 7-6-1-11 3z" fill="none" stroke="#fff" strokeWidth="1.200" /></svg>
                    <TaskButton task={firstTask} />
                    <svg viewBox="0 0 16 16" className="mr-[7px] ml-2 size-4 shrink-0" fill="none" stroke="#58b838" strokeWidth="3"><path d="M3 9h11q0-6-6-6T2 9q1 5 6 5 4 0 5-2" /></svg>
                    {topTasks.map((t) => <TaskButton key={t.text} task={t} />)}
                </div>
                <div className="flex gap-0.5">
                    {bottomTasks.map((t) => <TaskButton key={t.text} task={t} />)}
                </div>
            </div>
            <div className="ml-3 h-[66px] w-[3px] shrink-0 border-r border-l border-l-[#808080] border-r-white" />
            <div className="flex w-[26px] shrink-0 flex-col items-center gap-1.5 pt-1 pl-1">
                <Keyboard className="size-4 text-[#808080]" />
                <svg viewBox="0 0 8 7" className="h-[7px] w-2" fill="none" stroke="#000"><path d="M2.500 2V.5h5v4H6M.5 2.500h5v4h-5z" /></svg>
                <svg viewBox="0 0 6 3" className="h-[3px] w-1.5"><path d="M0 0h6L3 3z" /></svg>
            </div>
            <div className="mr-[3px] flex h-[69px] w-[145px] shrink-0 border border-t-[#808080] border-r-white border-b-white border-l-[#808080] pl-0.5">
                <ChevronsUp className="mt-1 size-3 shrink-0" strokeWidth={2.5} />
                <div className="ml-2 grid shrink-0 grid-cols-2 place-items-center gap-x-2 text-[#777]">
                    <Plug className="size-4 fill-white" />
                    <svg viewBox="0 0 16 14" className="h-[14px] w-4" fill="#fff" stroke="#777"><path d="M.5 10.500h2v3h-2zM4 8.500h2v5H4zM7.500 6.500h2v7h-2zM10.500 3.500h2v10h-2zM13.500 .5h2v13h-2z" /></svg>
                    <svg viewBox="0 0 16 16" className="size-4"><path d="M13 2Q5 0 3 8q0 5 8 6M5 8l7-4" fill="none" stroke="#e02818" strokeWidth="3.500" /><rect x="7" y="9" width="9" height="6" fill="#f8e0a0" stroke="#a08040" /></svg>
                    <Volume2 className="size-4 fill-white" strokeWidth={1.5} />
                    <svg viewBox="0 0 16 16" className="size-4" fill="#1888e8"><path d="M2 2l14-2-3 4-6 1-1 2 7-1-3 4H6l-1 5-3 1z" /></svg>
                    <svg viewBox="0 0 16 14" className="h-[14px] w-4"><path d="M0 14L12 0v9z" fill="#e81818" /><path d="M10 6l6 8-5-3z" fill="#30c830" /></svg>
                </div>
                <div className="flex flex-1 flex-col items-center pt-1.5 pl-1 text-xs leading-[19px]">
                    <span>23:40</span>
                    <span>星期三</span>
                    <span className="text-[11px]">2017/4/12</span>
                </div>
                <svg viewBox="0 0 16 14" className="mt-7 h-[14px] w-4 shrink-0"><rect x=".5" y=".5" width="15" height="11" fill="#2a70d8" stroke="#c8d8f0" /><path d="M1 11l8-6 6 1V1H1z" fill="#4a90f0" /><path d="M4 13h7" stroke="#446" /></svg>
            </div>
        </footer>
    );
}

export default function App() {
    return (
        <div className="flex h-screen flex-col overflow-hidden bg-black">
            <div className="relative flex min-h-0 flex-1 flex-col overflow-hidden text-black">
                <TitleBar />
                <MenuBar />
                <div className="flex min-h-0 flex-1">
                    <Sidebar />
                    <Canvas />
                </div>
                <CommandBar />
                <StatusBar />
                <ExcelWindow />
                <svg className="pointer-events-none absolute inset-0 h-full w-full">
                    <path d="M1272 167L1410 321" stroke="#0f0" strokeWidth="7" strokeLinecap="round" />
                    <path d="M1399 324L1412 311 1425 333 1421 339 1404 331z" fill="#0f0" />
                </svg>
                <div className={clsx('absolute -top-7 left-[1361px] flex size-[46px] items-end justify-center rounded-full border-2 border-[#d8e8d8] bg-linear-to-b from-[#2f9f4f] to-[#4ecb6c] pb-1 text-[11px] leading-none font-bold text-white shadow-md', UI)}>
                    68
                </div>
            </div>
            <Taskbar />
        </div>
    );
}
